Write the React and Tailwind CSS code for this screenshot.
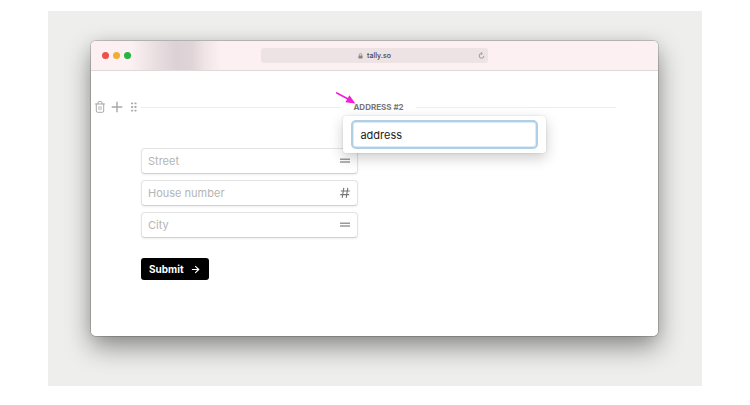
import React from 'react';
import { ArrowRight } from 'lucide-react';

const fields = [
  { id: 'street', label: 'Street', type: 'text' },
  { id: 'house-number', label: 'House number', type: 'number' },
  { id: 'city', label: 'City', type: 'text' },
];

const TrashIcon = () => (
  <svg viewBox="0 0 10 12" className="w-[10px] h-3" fill="none" stroke="currentColor" strokeLinecap="round" strokeLinejoin="round">
    <path d="M0.5 3h9M1.3 3v7a1.3 1.3 0 0 0 1.3 1.3h4.8A1.3 1.3 0 0 0 8.7 10V3M3 2.8V1.6A1 1 0 0 1 4 .6h2a1 1 0 0 1 1 1v1.2" />
    <path d="M4 5.5v3.2M6 5.5v3.2" strokeWidth="0.9" />
  </svg>
);

const PlusIcon = () => (
  <svg viewBox="0 0 12 12" className="w-3 h-3" stroke="currentColor" strokeWidth="1.4">
    <path d="M6 0.7v10.6M0.7 6h10.6" />
  </svg>
);

const DragIcon = () => (
  <svg viewBox="0 0 6 10" className="w-[6px] h-[10px]" fill="currentColor">
    {[0.5, 4.1, 7.7].map((y) => (
      <g key={y}>
        <rect x="0.1" y={y} width="2" height="1.8" rx="0.4" />
        <rect x="3.5" y={y} width="2" height="1.8" rx="0.4" />
      </g>
    ))}
  </svg>
);

const ShortTextIcon = () => (
  <svg viewBox="0 0 10 10" className="w-[10px] h-[10px]" stroke="currentColor" strokeWidth="1.5">
    <path d="M0 3.3h10M0 6.1h10" />
  </svg>
);

const NumberIcon = () => (
  <svg viewBox="0 0 10 12" className="w-[10px] h-3 text-[#777]" stroke="currentColor" strokeWidth="1.1">
    <path d="M0.8 4h9M0.2 7.6h9M3.8 0.8L2.2 10.8M7.8 0.8L6.2 10.8" />
  </svg>
);

const LockIcon = () => (
  <svg viewBox="0 0 6 7" className="w-[5px] h-[6px] text-[#8b8385]">
    <rect x="0.5" y="3" width="5" height="3.6" rx="0.6" fill="currentColor" />
    <path d="M1.5 3V2a1.5 1.5 0 0 1 3 0v1" fill="none" stroke="currentColor" strokeWidth="0.8" />
  </svg>
);

const ReloadIcon = () => (
  <svg viewBox="0 0 8 8" className="w-[7px] h-[7px]" fill="none" stroke="currentColor" strokeWidth="0.9">
    <path d="M4 1.7A2.7 2.7 0 1 0 6.7 4.4" />
    <path d="M3.4 0.3l1.6 1.4-1.6 1.4" />
  </svg>
);

const TitleBar = () => (
  <div className="relative h-[30px] flex items-center justify-center bg-[#fcf0f2] border-b border-[#dfd9da]">
    <div className="absolute inset-y-0 left-[40px] w-[90px] bg-[linear-gradient(to_right,#dcd1d400,#e6dbde_32%,#dcd1d4_50%,#dfd4d7_68%,#f0e4e6_82%,#fcf0f2)]" />
    <div className="absolute left-[11px] flex gap-1">
      <span className="w-[7px] h-[7px] rounded-full bg-[#ee4f4c]" />
      <span className="w-[7px] h-[7px] rounded-full bg-[#f3ad31]" />
      <span className="w-[7px] h-[7px] rounded-full bg-[#29b43d]" />
    </div>
    <div className="relative w-2/5 h-[15px] rounded-[3px] bg-[#ede2e4] flex items-center justify-center gap-1">
      <LockIcon />
      <span className="text-[7px] leading-none font-medium text-[#4a4446]">tally.so</span>
      <button type="button" aria-label="Reload" className="absolute right-[3px] text-[#8b8385]">
        <ReloadIcon />
      </button>
    </div>
  </div>
);

const NamePopover = () => (
  <div className="absolute z-10 top-[17px] -left-[10px] w-[203px] px-2 py-1 rounded-[3px] bg-white shadow-[0_0_2px_rgba(0,0,0,0.15),0_5px_14px_rgba(0,0,0,0.2)]">
    <input
      type="text"
      aria-label="Block name"
      defaultValue="address"
      className="block w-full h-[29px] px-[7px] rounded-[5px] border-2 border-[#b0cee4] text-[11px] text-[#222] bg-white outline-none shadow-[inset_0_0_0_1px_#dcebf5]"
    />
  </div>
);

const BlockHeader = () => (
  <div className="flex items-center h-4">
    <div className="w-[46px] shrink-0 flex items-center text-[#a8a8a8]">
      <button type="button" aria-label="Delete block" className="mr-[6px]">
        <TrashIcon />
      </button>
      <button type="button" aria-label="Add block" className="mr-2">
        <PlusIcon />
      </button>
      <button type="button" aria-label="Move block">
        <DragIcon />
      </button>
    </div>
    <div className="flex-1 flex items-center gap-3">
      <div className="flex-1 h-px bg-[#ededed]" />
      <div className="relative">
        <h2 className="text-[8px] leading-4 font-bold text-[#777] whitespace-nowrap">ADDRESS #2</h2>
        <svg viewBox="0 0 20 12" className="absolute z-20 -left-[17px] -top-[7px] w-5 h-3 text-[#f01fd8]">
          <path d="M0.8 0.9L13 7.4" stroke="currentColor" strokeWidth="1.7" strokeLinecap="round" />
          <path d="M19.4 11.4L9.4 10.2L13.4 3.2Z" fill="currentColor" />
        </svg>
        <NamePopover />
      </div>
      <div className="flex-1 h-px bg-[#ededed]" />
    </div>
  </div>
);

const Field = ({ id, label, type }) => (
  <div className="relative">
    <input
      id={id}
      type="text"
      aria-label={label}
      inputMode={type === 'number' ? 'numeric' : 'text'}
      placeholder={label}
      className="block w-full h-[26px] pl-[6px] pr-6 rounded-[4px] border border-[#e3e3e3] border-b-[#d2d2d2] bg-white text-[11px] placeholder:text-[#b5b5b5] shadow-[0_1px_2px_rgba(0,0,0,0.07)]"
    />
    <span className="absolute right-2 inset-y-0 flex items-center text-[#999]">
      {type === 'number' ? <NumberIcon /> : <ShortTextIcon />}
    </span>
  </div>
);

const App = () => {
  return (
    <div className="bg-white px-12 pt-[11px] pb-[19px] font-['Inter','Liberation_Sans',sans-serif]">
      <main className="bg-[#eeeeec] pl-[43px] pr-11 pt-[30px] pb-[50px]">
        <div className="rounded-[5px] shadow-[0_0_0_1px_rgba(0,0,0,0.16),0_0_14px_rgba(0,0,0,0.06),0_11px_26px_rgba(0,0,0,0.42)]">
          <div className="rounded-[5px] overflow-hidden bg-white">
            <TitleBar />
            <div className="pt-7 pb-14 pl-1 pr-[42px]">
              <BlockHeader />
              <form className="pl-[46px] mt-[33px]" onSubmit={(e) => e.preventDefault()}>
                <div className="w-[217px] flex flex-col gap-[6px]">
                  {fields.map((field) => (
                    <Field key={field.id} {...field} />
                  ))}
                </div>
                <button
                  type="submit"
                  className="mt-5 h-[22px] px-2 rounded-[3px] bg-black text-white text-[10px] font-bold flex items-center gap-[6px]"
                >
                  Submit
                  <ArrowRight className="w-[11px] h-[11px]" strokeWidth={2.4} />
                </button>
              </form>
            </div>
          </div>
        </div>
      </main>
    </div>
  );
};

export default App;
